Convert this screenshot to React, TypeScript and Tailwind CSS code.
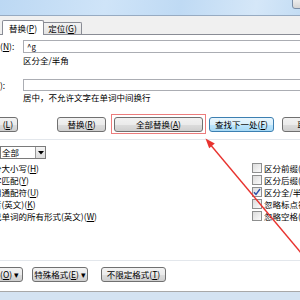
import React from "react";

const F = "font-['Noto_Sans_CJK_SC',sans-serif]";

function Btn({
  children,
  w,
  focused,
  className = "",
}: {
  children: React.ReactNode;
  w: string;
  focused?: boolean;
  className?: string;
}) {
  return (
    <div
      className={`${w} h-[15px] shrink-0 rounded-[3px] border flex items-center justify-center text-[8.5px] leading-none text-black whitespace-nowrap ${
        focused
          ? "border-[#3c7fb1] bg-[linear-gradient(#eaf6fd_0%,#d9f0fc_50%,#bee6fd_51%,#a7d9f5_100%)]"
          : "border-[#707070] bg-[linear-gradient(#f2f2f2_0%,#ebebeb_50%,#dddddd_51%,#cfcfcf_100%)]"
      } ${className}`}
    >
      {children}
    </div>
  );
}

function Check({ checked }: { checked?: boolean }) {
  return (
    <div className="w-[10px] h-[10px] shrink-0 border border-[#8e8f8f] bg-[linear-gradient(135deg,#dcdcdc,#fbfbfb)] flex items-center justify-center">
      {checked && (
        <svg width="8" height="8" viewBox="0 0 8 8">
          <path d="M1 4.2 L3 6.5 L7 1" stroke="#2a4fa8" strokeWidth="1.4" fill="none" />
        </svg>
      )}
    </div>
  );
}

export default function App() {
  const leftRows = [
    <>分大小写(<u>H</u>)</>,
    <>字匹配(<u>Y</u>)</>,
    <>用通配符(<u>U</u>)</>,
    <>音(英文)(<u>K</u>)</>,
    <>找单词的所有形式(英文)(<u>W</u>)</>,
  ];
  const rightRows: [React.ReactNode, boolean][] = [
    [<>区分前缀(<u>X</u>)</>, false],
    [<>区分后缀(<u>T</u>)</>, false],
    [<>区分全/半角(<u>M</u>)</>, true],
    [<>忽略标点符号(<u>S</u>)</>, false],
    [<>忽略空格(<u>W</u>)</>, false],
  ];
  return (
    <div className={`relative w-[300px] h-[300px] overflow-hidden bg-white ${F}`}>
      {/* title bar */}
      <div className="relative h-[16px] border-b border-[#97abc2] bg-[linear-gradient(100deg,#bcd8f3_0%,#cfe4f8_35%,#bfdaf4_60%,#d5e7f8_85%,#c4ddf4_100%)]">
        <div className="absolute right-[-10px] top-[-3px] w-[18px] h-[12px] rounded-[3px] border border-[#7a8ea6] bg-[linear-gradient(#f2f2f2,#d5d5d5)]" />
      </div>
      {/* tab strip */}
      <div className="h-[19px] bg-[#f0f0f0] flex items-end pl-[2px] border-b border-[#898c95]">
        <div className="relative -mb-px w-[42px] h-[15px] bg-white border border-b-0 border-[#898c95] rounded-t-[2px] flex items-center justify-center text-[8.5px] leading-none">
          替换(<u>P</u>)
        </div>
        <div className="w-[38px] h-[12px] border border-l-0 border-b-0 border-[#898c95] bg-[linear-gradient(#f3f3f3,#e3e3e3)] rounded-tr-[2px] flex items-center justify-center text-[8.5px] leading-none">
          定位(<u>G</u>)
        </div>
      </div>
      {/* panel */}
      <div className="flex flex-col">
        <div className="mt-[5px] flex items-center h-[13px]">
          <div className="w-[20px] shrink-0 text-[8.5px] leading-none whitespace-nowrap">(<u>N</u>):</div>
          <div className="flex-1 h-[13px] border border-[#abadb3] border-r-0 flex items-center pl-[3px] text-[8px] leading-none ml-[3px]">
            ^g
          </div>
        </div>
        <div className="mt-[2px] h-[10px] pl-[23px] text-[8.5px] leading-[10px] whitespace-nowrap">区分全/半角</div>
        <div className="mt-[14px] flex items-center h-[12px]">
          <div className="w-[23px] shrink-0 text-[8.5px] leading-none whitespace-nowrap">):</div>
          <div className="flex-1 h-[12px] border border-[#abadb3] border-r-0 bg-white" />
        </div>
        <div className="mt-[1px] h-[10px] pl-[23px] text-[8.5px] leading-[10px] whitespace-nowrap">
          居中，不允许文字在单词中间换行
        </div>
        {/* button row */}
        <div className="mt-[12px] h-[20px] flex items-center">
          <Btn w="w-[48px]" className="-ml-[30px] justify-end pr-[4px]">
            (<u>L</u>)
          </Btn>
          <Btn w="w-[49px]" className="ml-[39px]">
            替换(<u>R</u>)
          </Btn>
          <div className="ml-[5px] w-[95px] h-[20px] border border-[#ec7d7d] flex items-center justify-center shrink-0">
            <Btn w="w-[89px]">全部替换(<u>A</u>)</Btn>
          </div>
          <Btn w="w-[65px]" focused className="ml-[3px]">
            查找下一处(<u>F</u>)
          </Btn>
          <Btn w="w-[48px]" className="ml-[8px]">
            取消
          </Btn>
        </div>
        <div className="mt-[5px] h-px bg-[#e3e7ec]" />
        {/* options */}
        <div className="flex">
          <div className="flex flex-col w-[252px] shrink-0">
            <div className="mt-[6px] w-[46px] h-[13px] border border-[#7a7a7a] flex items-center">
              <div className="flex-1 text-[8.5px] leading-none pl-[1px]">全部</div>
              <div className="w-[10px] h-[11px] border-l border-[#9a9a9a] bg-[linear-gradient(#f4f4f4,#dcdcdc)] flex items-center justify-center">
                <svg width="6" height="4" viewBox="0 0 6 4">
                  <path d="M0 0 L6 0 L3 3.5 Z" fill="#000" />
                </svg>
              </div>
            </div>
            <div className="mt-[3px] flex flex-col">
              {leftRows.map((r, i) => (
                <div key={i} className="h-[12px] flex items-center text-[8.5px] leading-none whitespace-nowrap -ml-[7px]">
                  {r}
                </div>
              ))}
            </div>
          </div>
          <div className="mt-[22px] flex flex-col shrink-0">
            {rightRows.map(([t, c], i) => (
              <div key={i} className="h-[12px] flex items-center gap-[2px] text-[8.5px] leading-none whitespace-nowrap">
                <Check checked={c} />
                <span>{t}</span>
              </div>
            ))}
          </div>
        </div>
        <div className="mt-[38px] h-px bg-[#e3e7ec]" />
        <div className="mt-[6px] h-[15px] flex items-center">
          <Btn w="w-[46px]" className="-ml-[23px] justify-end pr-[3px]">
            (<u>O</u>) ▾
          </Btn>
          <Btn w="w-[56px]" className="ml-[9px]">
            特殊格式(<u>E</u>) ▾
          </Btn>
          <Btn w="w-[65px]" className="ml-[13px]">
            不限定格式(<u>T</u>)
          </Btn>
        </div>
        <div className="mt-[9px] h-px bg-[#a8a8a8]" />
        <div className="h-[8px] bg-[#d4e3f2]" />
      </div>
      {/* red arrow annotation */}
      <svg className="absolute inset-0 pointer-events-none" width="300" height="300" viewBox="0 0 300 300">
        <line x1="302" y1="254" x2="209" y2="143" stroke="#e8332f" strokeWidth="1.4" />
        <polygon points="205.5,138.5 209.2,148.3 214.8,143.5" fill="#e8332f" />
      </svg>
    </div>
  );
}
